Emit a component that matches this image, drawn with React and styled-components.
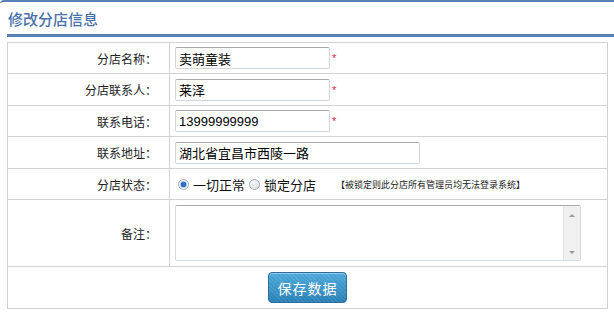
import React from 'react';
import styled, { createGlobalStyle } from 'styled-components';

const Global = createGlobalStyle`
    body {
        margin: 0;
        background: #fff;
        font-family: "Liberation Sans", "Noto Sans CJK SC", sans-serif;
        color: #333;
    }
`

const Page = styled.div`
    width: 614px;
    height: 314px;
    border-top: 2px solid #5a7eb6;
    border-top-left-radius: 4px;
    box-sizing: border-box;
    padding-left: 7px;
    overflow: hidden;
`

const Title = styled.h2`
    margin: 0;
    height: 32px;
    line-height: 34px;
    font-size: 15px;
    font-weight: 500;
    color: #4a70aa;
    padding-left: 1px;
    font-family: "Noto Sans CJK SC", sans-serif;
`

const Bar = styled.div`
    height: 3px;
    background: #5a7eb6;
    margin-bottom: 5px;
`

const Table = styled.table`
    width: 601px;
    border-collapse: collapse;
    font-size: 12px;
    font-family: "Liberation Sans", "Noto Sans CJK SC", sans-serif;

    td {
        border: 1px solid #d2d2d2;
        padding: 0;
    }
`

const Row = styled.tr`
    height: ${p => p.h}px;
`

const Label = styled.td`
    width: 149px;
    text-align: right;
    padding-right: 12px !important;
    color: #222;
`

const Value = styled.td`
    padding-left: 5px !important;
`

const Input = styled.input`
    box-sizing: border-box;
    width: ${p => p.w}px;
    height: 22px;
    border: 1px solid #cfd6de;
    border-top-color: #a9a9a9;
    border-radius: 2px;
    padding: 0 3px;
    font-size: 13px;
    font-family: "Liberation Sans", "Noto Sans CJK SC", sans-serif;
    color: #000;
    vertical-align: middle;
    outline: none;
`

const Star = styled.span`
    color: #e0264a;
    font-size: 11px;
    margin-left: 2px;
    vertical-align: middle;
`

const RadioGroup = styled.div`
    display: flex;
    align-items: center;
    padding-left: 3px;
    font-size: 13px;
    color: #111;
`

const Radio = styled.span`
    width: 11px;
    height: 11px;
    border-radius: 50%;
    box-sizing: border-box;
    border: 1px solid #a9b0b8;
    background: ${p => p.on
        ? 'radial-gradient(circle, #2f6fc0 0 2.5px, #9cc4ee 3px, #f4f8fc 4px)'
        : 'radial-gradient(circle at 40% 35%, #fafafa, #d6d9dc)'};
    margin-right: 4px;
`

const RadioText = styled.span`
    margin-right: 4px;
`

const Note = styled.span`
    margin-left: 16px;
    font-size: 9px;
    color: #222;
`

const AreaBox = styled.div`
    display: flex;
    width: 406px;
    height: 56px;
    box-sizing: border-box;
    border: 1px solid #d4dbe2;
    border-top-color: #a9a9a9;
    border-radius: 2px;
`

const Area = styled.textarea`
    flex: 1;
    border: none;
    resize: none;
    outline: none;
    font-family: inherit;
`

const Scroll = styled.div`
    width: 16px;
    background: #f0f0f0;
    border-left: 1px solid #e4e4e4;
    display: flex;
    flex-direction: column;
    justify-content: space-between;
    align-items: center;
    padding: 8px 0 6px;
`

const Arrow = styled.span`
    width: 0;
    height: 0;
    border-left: 3px solid transparent;
    border-right: 3px solid transparent;
    ${p => p.up ? 'border-bottom: 3px solid #999;' : 'border-top: 3px solid #999;'}
`

const Center = styled.td`
    text-align: center;
`

const Button = styled.button`
    width: 79px;
    height: 31px;
    border: 1px solid #2c6f9f;
    border-radius: 4px;
    color: #fff;
    font-size: 14px;
    font-family: "Noto Sans CJK SC", sans-serif;
    letter-spacing: 1px;
    background:
        repeating-linear-gradient(45deg, rgba(255,255,255,0.07) 0 1px, transparent 1px 3px),
        linear-gradient(#4eaadb, #2a80b6);
    box-shadow: inset 0 1px 0 rgba(255,255,255,0.35);
    vertical-align: middle;
`

export default function App() {
    return (
        <Page>
            <Global />
            <Title>修改分店信息</Title>
            <Bar />
            <Table>
                <tbody>
                    <Row h={31}>
                        <Label>分店名称：</Label>
                        <Value><Input w={155} defaultValue="卖萌童装" /><Star>*</Star></Value>
                    </Row>
                    <Row h={32}>
                        <Label>分店联系人：</Label>
                        <Value><Input w={155} defaultValue="莱泽" /><Star>*</Star></Value>
                    </Row>
                    <Row h={31}>
                        <Label>联系电话：</Label>
                        <Value><Input w={155} defaultValue="13999999999" /><Star>*</Star></Value>
                    </Row>
                    <Row h={32}>
                        <Label>联系地址：</Label>
                        <Value><Input w={245} defaultValue="湖北省宜昌市西陵一路" /></Value>
                    </Row>
                    <Row h={31}>
                        <Label>分店状态：</Label>
                        <Value>
                            <RadioGroup>
                                <Radio on />
                                <RadioText>一切正常</RadioText>
                                <Radio />
                                <RadioText>锁定分店</RadioText>
                                <Note>【被锁定则此分店所有管理员均无法登录系统】</Note>
                            </RadioGroup>
                        </Value>
                    </Row>
                    <Row h={67}>
                        <Label>备注：</Label>
                        <Value>
                            <AreaBox>
                                <Area />
                                <Scroll>
                                    <Arrow up />
                                    <Arrow />
                                </Scroll>
                            </AreaBox>
                        </Value>
                    </Row>
                    <Row h={42}>
                        <Center colSpan={2}><Button>保存数据</Button></Center>
                    </Row>
                </tbody>
            </Table>
        </Page>
    );
}
